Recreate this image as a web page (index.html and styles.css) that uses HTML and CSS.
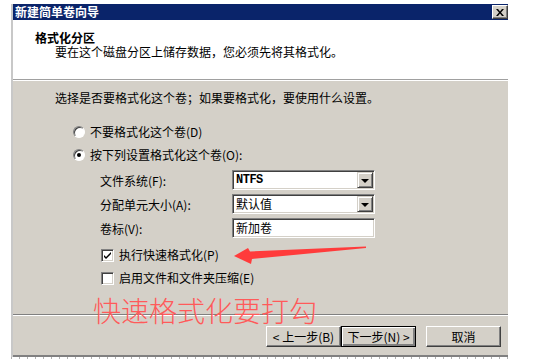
FILE: index.html
```html
<!DOCTYPE html>
<html lang="zh">
<head>
<meta charset="utf-8">
<link rel="stylesheet" href="styles.css">
</head>
<body>
<div class="window">
  <div class="titlebar">
    <span class="title">新建简单卷向导</span>
    <span class="close"><svg width="8" height="7" viewBox="0 0 8 7"><path d="M0 0h2l2 2.5L6 0h2L5 3.5 8 7H6L4 4.5 2 7H0l3-3.5z" fill="#000"/></svg></span>
  </div>
  <div class="header">
    <div class="h-title">格式化分区</div>
    <div class="h-sub">要在这个磁盘分区上储存数据，您必须先将其格式化。</div>
  </div>
  <div class="content">
    <div class="intro">选择是否要格式化这个卷；如果要格式化，要使用什么设置。</div>
    <div class="radio-row r1"><span class="radio"></span><span>不要格式化这个卷(D)</span></div>
    <div class="radio-row r2"><span class="radio checked"></span><span>按下列设置格式化这个卷(O):</span></div>
    <div class="fields">
      <div class="field">
        <span class="label">文件系统(F):</span>
        <span class="select"><span class="val ntfs">NTFS</span><span class="drop"><i></i></span></span>
      </div>
      <div class="field">
        <span class="label">分配单元大小(A):</span>
        <span class="select"><span class="val">默认值</span><span class="drop"><i></i></span></span>
      </div>
      <div class="field">
        <span class="label">卷标(V):</span>
        <span class="select"><span class="val">新加卷</span></span>
      </div>
    </div>
    <div class="check-row c1"><span class="check"><svg width="9" height="9" viewBox="0 0 9 9"><path d="M1 4l2 2 5-5v2L3 8 1 6z" fill="#000"/></svg></span><span>执行快速格式化(P)</span></div>
    <div class="check-row c2"><span class="check"></span><span>启用文件和文件夹压缩(E)</span></div>
  </div>
  <div class="footer">
    <button class="btn">&lt; 上一步(B)</button>
    <button class="btn default">下一步(N) &gt;</button>
    <button class="btn cancel">取消</button>
  </div>
  <svg class="arrow" width="545" height="363" viewBox="0 0 545 363"><polygon points="234,256 248,248 250,251.5 366,246.5 366,248 252,259 251,264" fill="#ff3b3b"/></svg>
  <div class="note">快速格式化要打勾</div>
</div>
<div class="ruler"></div>
</body>
</html>
```
FILE: styles.css
```css
html, body {
  margin: 0;
  padding: 0;
  background: #fff;
}
body {
  font-family: "Noto Sans CJK SC", "Liberation Sans", sans-serif;
  font-size: 12px;
  color: #000;
}
.window {
  position: relative;
  margin: 4px 0 0 11px;
  width: 497px;
  border-left: 2px solid #c8c8c8;
  box-sizing: border-box;
  display: flex;
  flex-direction: column;
}
.titlebar {
  height: 16px;
  background: #0a246a;
  display: flex;
  align-items: center;
  justify-content: space-between;
  padding-left: 2px;
}
.title {
  color: #fff;
  font-weight: bold;
  font-size: 12px;
  line-height: 16px;
}
.close {
  width: 16px;
  height: 14px;
  box-sizing: border-box;
  background: #d4d0c8;
  border: 1px solid;
  border-color: #fff #404040 #404040 #fff;
  box-shadow: inset -1px -1px #808080;
  display: flex;
  align-items: center;
  justify-content: center;
}
.close svg { display: block; }
.header {
  height: 60px;
  background: #fff;
  box-sizing: border-box;
  padding-top: 11px;
  border-bottom: 1px solid #a0a0a0;
}
.h-title {
  font-weight: bold;
  line-height: 14px;
  padding-left: 22px;
}
.h-sub {
  line-height: 14px;
  padding-left: 42px;
}
.content {
  height: 235px;
  background: #d4d0c8;
  box-sizing: border-box;
  border-top: 1px solid #fff;
  padding: 9px 0 0 42px;
  border-bottom: 1px solid #808080;
}
.intro { line-height: 16px; }
.radio-row, .check-row {
  display: flex;
  align-items: center;
  line-height: 16px;
}
.radio-row { margin-left: 18px; gap: 5px; }
.r1 { margin-top: 18px; }
.r2 { margin-top: 7px; }
.radio {
  width: 12px;
  height: 12px;
  box-sizing: border-box;
  border-radius: 50%;
  background: #fff;
  border: 1px solid;
  border-color: #808080 #fff #fff #808080;
  box-shadow: inset 1px 1px #404040;
  position: relative;
}
.radio.checked::after {
  content: "";
  position: absolute;
  left: 3px;
  top: 3px;
  width: 4px;
  height: 4px;
  border-radius: 50%;
  background: #000;
}
.fields {
  margin-top: 7px;
  display: flex;
  flex-direction: column;
  gap: 4px;
}
.field {
  display: flex;
  align-items: center;
  height: 20px;
  padding-left: 45px;
}
.label { width: 132px; }
.select {
  width: 143px;
  height: 20px;
  box-sizing: border-box;
  background: #fff;
  border: 1px solid;
  border-color: #808080 #fff #fff #808080;
  box-shadow: inset 1px 1px #404040, inset -1px -1px #d4d0c8;
  display: flex;
  align-items: center;
  justify-content: space-between;
  padding: 1px;
}
.val {
  padding-left: 2px;
  line-height: 16px;
}
.ntfs { font-weight: bold; font-family: "Liberation Mono", monospace; letter-spacing: -0.5px; }
.drop {
  width: 16px;
  height: 16px;
  box-sizing: border-box;
  background: #d4d0c8;
  border: 1px solid;
  border-color: #d4d0c8 #404040 #404040 #d4d0c8;
  box-shadow: inset 1px 1px #fff, inset -1px -1px #808080;
  display: flex;
  align-items: center;
  justify-content: center;
}
.drop i {
  width: 0;
  height: 0;
  border-left: 4px solid transparent;
  border-right: 4px solid transparent;
  border-top: 4px solid #000;
  margin-top: 1px;
}
.check-row { margin-left: 46px; gap: 5px; }
.c1 { margin-top: 9px; }
.c2 { margin-top: 7px; }
.check {
  width: 13px;
  height: 13px;
  box-sizing: border-box;
  background: #fff;
  border: 1px solid;
  border-color: #808080 #fff #fff #808080;
  box-shadow: inset 1px 1px #404040, inset -1px -1px #d4d0c8;
  display: flex;
  align-items: center;
  justify-content: center;
}
.check svg { display: block; }
.footer {
  height: 42px;
  background: #d4d0c8;
  border-top: 1px solid #fff;
  border-bottom: 2px solid #808080;
  box-sizing: border-box;
  display: flex;
  align-items: flex-start;
  padding: 10px 0 0 253px;
}
.btn {
  width: 75px;
  height: 21px;
  box-sizing: border-box;
  margin: 0;
  padding: 0;
  font-family: inherit;
  font-size: 12px;
  color: #000;
  background: #d4d0c8;
  border: 1px solid;
  border-color: #fff #404040 #404040 #fff;
  box-shadow: inset -1px -1px #808080;
}
.btn.default {
  border: 1px solid #000;
  box-shadow: inset 1px 1px #fff, inset -2px -2px #808080, inset -1px -1px #404040;
}
.btn.cancel { margin-left: 10px; }
.arrow {
  position: absolute;
  left: -13px;
  top: -4px;
  pointer-events: none;
}
.note {
  position: absolute;
  left: 80px;
  top: 290px;
  font-family: "Noto Sans CJK SC Light", "Noto Sans CJK SC DemiLight", "Noto Sans CJK SC", sans-serif;
  font-size: 28px;
  line-height: 32px;
  font-weight: 200;
  color: #ff5a5a;
}
.ruler {
  margin-left: 11px;
  width: 497px;
  height: 2px;
  background: repeating-linear-gradient(90deg, #b0b0b0 0 1px, transparent 1px 8px);
}
```
